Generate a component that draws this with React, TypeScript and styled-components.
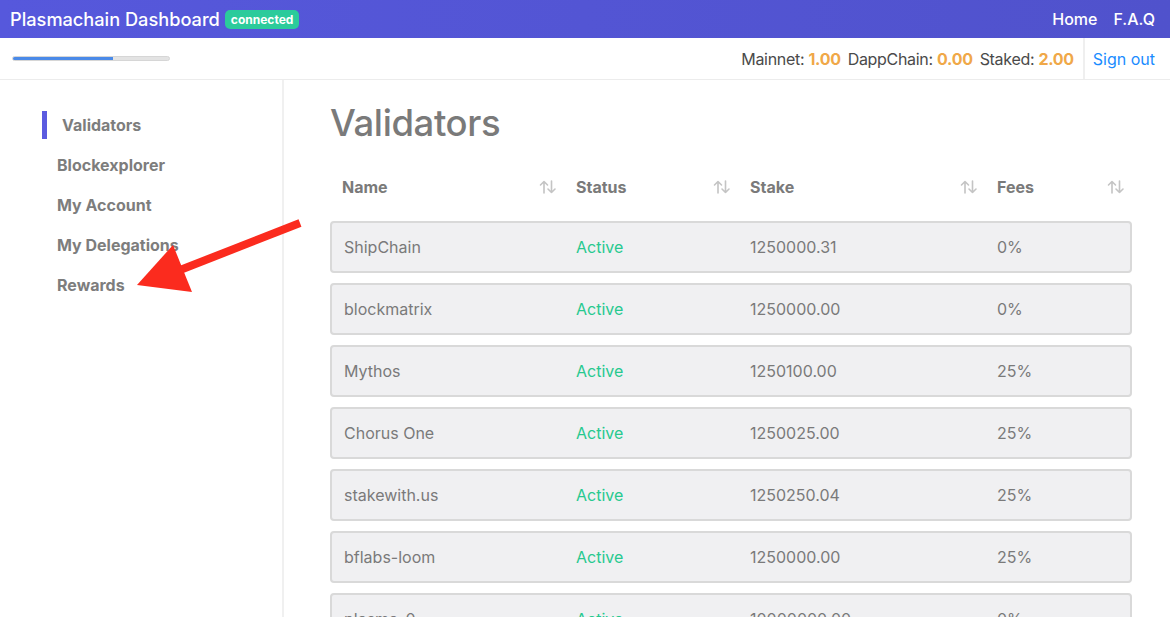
import React from "react";
import styled, { createGlobalStyle } from "styled-components";

const Global = createGlobalStyle`
  html, body { margin: 0; padding: 0; background: #fff; }
  body { font-family: Inter, "Noto Sans", "Liberation Sans", sans-serif; overflow: hidden; }
  * { box-sizing: border-box; }
`;

const Page = styled.div`
  position: relative;
  width: 1170px;
  height: 617px;
  overflow: hidden;
`;

const Navbar = styled.header`
  height: 38px;
  background: linear-gradient(90deg, #5658dc 0%, #5052cc 100%);
  display: flex;
  align-items: center;
  justify-content: space-between;
  padding: 0 15px 0 10px;
  color: #fff;
`;

const Brand = styled.div`
  display: flex;
  align-items: center;
  gap: 5px;
  font-size: 18.2px;
  font-weight: 500;
`;

const Badge = styled.span`
  background: #2bcb9b;
  color: #fff;
  font-size: 12px;
  font-weight: 700;
  border-radius: 5px;
  padding: 3px 6px 3px;
  line-height: 13px;
`;

const NavLinks = styled.nav`
  display: flex;
  gap: 16px;
  font-size: 16px;
  font-weight: 500;
`;

const SubBar = styled.div`
  height: 42px;
  border-bottom: 1px solid #ececec;
  display: flex;
  align-items: center;
  justify-content: space-between;
  padding-left: 12px;
`;

const Progress = styled.div`
  width: 158px;
  height: 5px;
  background: #e3e3e3;
  border: 1px solid #d6d6d6;
  border-radius: 3px;
  overflow: hidden;
`;

const ProgressFill = styled.div`
  height: 100%;
  background: #4a8ae8;
`;

const SubRight = styled.div`
  display: flex;
  align-items: stretch;
  height: 100%;
`;

const Balances = styled.div`
  display: flex;
  align-items: center;
  gap: 7px;
  padding-right: 9px;
  font-size: 16px;
  letter-spacing: -0.3px;
  color: #4a4a4a;
  border-right: 2px solid #efefef;
`;

const Amount = styled.span`
  color: #f0a848;
  font-weight: 700;
`;

const SignOut = styled.a`
  display: flex;
  align-items: center;
  padding: 0 15px 0 8px;
  font-size: 16px;
  color: #1a8cff;
`;

const Body = styled.div`
  display: flex;
  height: 537px;
`;

const Sidebar = styled.aside`
  width: 284px;
  flex-shrink: 0;
  border-right: 2px solid #f0f0f0;
  padding-top: 25px;
  padding-left: 42px;
  display: flex;
  flex-direction: column;
`;

const NavItem = styled.div<{ $active?: boolean }>`
  display: flex;
  align-items: center;
  font-size: 16px;
  font-weight: 700;
  color: #7d7d7d;
  padding-left: 15px;
  border-left: 5px solid ${(p) => (p.$active ? "#5b5be0" : "transparent")};
  margin-left: ${(p) => (p.$active ? "0" : "-5px")};
  height: ${(p) => (p.$active ? "28px" : "40px")};
  margin-top: ${(p) => (p.$active ? "6px" : "0")};
  margin-bottom: ${(p) => (p.$active ? "6px" : "0")};
`;

const Main = styled.main`
  flex: 1;
  padding: 18px 38px 0 46px;
`;

const Title = styled.h1`
  margin: 0;
  font-size: 36.5px;
  font-weight: 500;
  color: #7a7a7a;
  letter-spacing: -0.4px;
  line-height: 50px;
`;

const HeadRow = styled.div`
  display: grid;
  grid-template-columns: 234px 174px 247px 1fr;
  height: 36px;
  margin-top: 21px;
  margin-bottom: 16px;
  align-items: center;
`;

const HeadCell = styled.div`
  display: flex;
  align-items: center;
  justify-content: space-between;
  padding: 0 7px 0 12px;
  font-size: 16px;
  font-weight: 700;
  color: #7a7a7a;
`;

const Row = styled.div`
  display: grid;
  grid-template-columns: 232px 174px 247px 1fr;
  height: 52px;
  align-items: center;
  background: #f0f0f2;
  border: 2px solid #d9d9d9;
  border-radius: 4px;
  margin-bottom: 10px;
  font-size: 16px;
  color: #7a7a7a;
`;

const Cell = styled.div<{ $green?: boolean }>`
  padding-left: 12px;
  color: ${(p) => (p.$green ? "#27c98f" : "#7a7a7a")};
`;

const Arrow = styled.svg`
  position: absolute;
  left: 0;
  top: 0;
  pointer-events: none;
`;

const SortIcon = () => (
  <svg width="18" height="14" viewBox="0 0 18 14" fill="none" stroke="#c4c4c4" strokeWidth="1.6" strokeLinecap="round" strokeLinejoin="round">
    <path d="M5 13V1.5M1.5 5L5 1.5L8.5 5" />
    <path d="M12.5 1V12.5M9 9L12.5 12.5L16 9" />
  </svg>
);

const rows = [
  ["ShipChain", "1250000.31", "0%"],
  ["blockmatrix", "1250000.00", "0%"],
  ["Mythos", "1250100.00", "25%"],
  ["Chorus One", "1250025.00", "25%"],
  ["stakewith.us", "1250250.04", "25%"],
  ["bflabs-loom", "1250000.00", "25%"],
  ["plasma-0", "10000000.00", "0%"],
];

export default function App() {
  return (
    <Page>
      <Global />
      <Navbar>
        <Brand>
          Plasmachain Dashboard <Badge>connected</Badge>
        </Brand>
        <NavLinks>
          <span>Home</span>
          <span>F.A.Q</span>
        </NavLinks>
      </Navbar>
      <SubBar>
        <Progress>
          <ProgressFill style={{ width: "64%" }} />
        </Progress>
        <SubRight>
          <Balances>
            <span>
              Mainnet: <Amount>1.00</Amount>
            </span>
            <span>
              DappChain: <Amount>0.00</Amount>
            </span>
            <span>
              Staked: <Amount>2.00</Amount>
            </span>
          </Balances>
          <SignOut>Sign out</SignOut>
        </SubRight>
      </SubBar>
      <Body>
        <Sidebar>
          <NavItem $active>Validators</NavItem>
          <NavItem>Blockexplorer</NavItem>
          <NavItem>My Account</NavItem>
          <NavItem>My Delegations</NavItem>
          <NavItem>Rewards</NavItem>
        </Sidebar>
        <Main>
          <Title>Validators</Title>
          <HeadRow>
            <HeadCell>
              Name <SortIcon />
            </HeadCell>
            <HeadCell>
              Status <SortIcon />
            </HeadCell>
            <HeadCell>
              Stake <SortIcon />
            </HeadCell>
            <HeadCell>
              Fees <SortIcon />
            </HeadCell>
          </HeadRow>
          {rows.map((r) => (
            <Row key={r[0]}>
              <Cell>{r[0]}</Cell>
              <Cell $green>Active</Cell>
              <Cell>{r[1]}</Cell>
              <Cell>{r[2]}</Cell>
            </Row>
          ))}
        </Main>
      </Body>
      <Arrow width="1170" height="617" viewBox="0 0 1170 617">
        <line x1="300" y1="223" x2="175" y2="272" stroke="#fb2b1e" strokeWidth="8" />
        <polygon points="137,285 173,245 192,292" fill="#fb2b1e" />
      </Arrow>
    </Page>
  );
}
